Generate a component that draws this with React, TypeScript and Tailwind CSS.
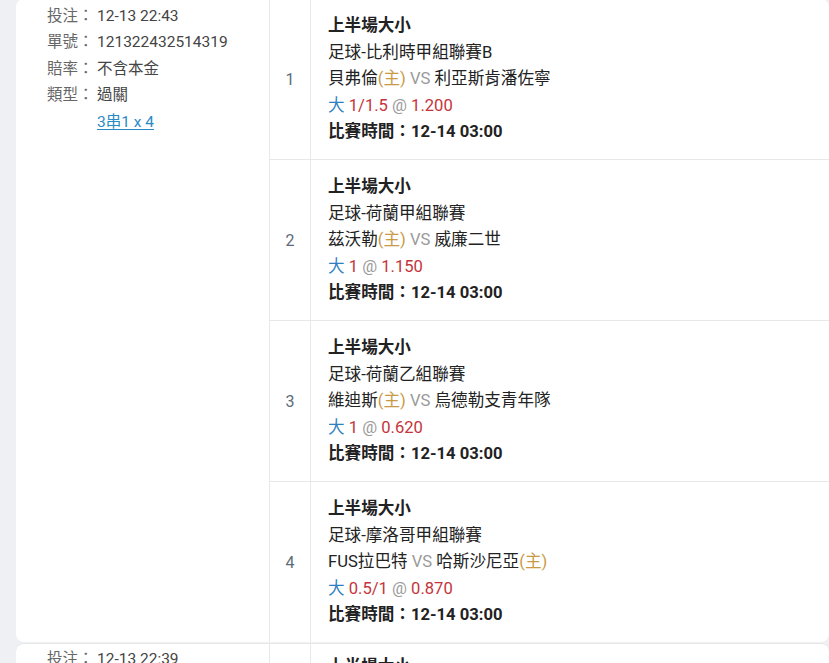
import React from 'react';

type Leg = {
  no: number;
  league: string;
  home: string;
  away: string;
  homeFirst: boolean;
  line: string;
  odds: string;
};

const legs: Leg[] = [
  { no: 1, league: '足球-比利時甲組聯賽B', home: '貝弗倫', away: '利亞斯肯潘佐寧', homeFirst: true, line: '1/1.5', odds: '1.200' },
  { no: 2, league: '足球-荷蘭甲組聯賽', home: '茲沃勒', away: '威廉二世', homeFirst: true, line: '1', odds: '1.150' },
  { no: 3, league: '足球-荷蘭乙組聯賽', home: '維迪斯', away: '烏德勒支青年隊', homeFirst: true, line: '1', odds: '0.620' },
  { no: 4, league: '足球-摩洛哥甲組聯賽', home: '哈斯沙尼亞', away: 'FUS拉巴特', homeFirst: false, line: '0.5/1', odds: '0.870' },
];

const font = { fontFamily: 'Roboto, "Noto Sans CJK TC", sans-serif' };

const Info: React.FC<{ label: string; children: React.ReactNode }> = ({ label, children }) => (
  <div className="flex h-[26.5px] items-center">
    <span className="w-[50px] text-[#666]">{label}</span>
    <span className="text-[#444]">{children}</span>
  </div>
);

const LegRow: React.FC<{ leg: Leg; last: boolean }> = ({ leg, last }) => (
  <div className={`flex ${last ? 'h-[160px]' : 'h-[161px] border-b border-[#e8e8e8]'}`}>
    <div className="flex w-[41px] shrink-0 items-center justify-center border-r border-[#e8e8e8] pt-[2px] text-[16px] text-[#5d6b78]">
      {leg.no}
    </div>
    <div className="flex flex-col pl-[17px] pt-[14px] text-[16.6px] leading-[26.5px] text-[#222]">
      <div className="font-bold">上半場大小</div>
      <div>{leg.league}</div>
      <div>
        {leg.homeFirst ? (
          <>
            {leg.home}
            <span className="text-[#c99a45]">(主)</span>
            <span className="text-[#9a9a9a]"> VS </span>
            {leg.away}
          </>
        ) : (
          <>
            {leg.away}
            <span className="text-[#9a9a9a]"> VS </span>
            {leg.home}
            <span className="text-[#c99a45]">(主)</span>
          </>
        )}
      </div>
      <div>
        <span className="text-[#2f7fc0]">大</span>{' '}
        <span className="text-[#c4343a]">{leg.line}</span>{' '}
        <span className="text-[#9a9a9a]">@</span>{' '}
        <span className="text-[#c4343a]">{leg.odds}</span>
      </div>
      <div className="font-bold">比賽時間：12-14 03:00</div>
    </div>
  </div>
);

export default function App() {
  return (
    <div className="h-[663px] overflow-hidden bg-[#eef0f3] pl-4 text-[15.5px]" style={font}>
      <div className="-mt-px flex rounded-lg bg-white">
        <div className="w-[254px] shrink-0 border-r border-[#e8e8e8] pl-[31px] pt-[4px]">
          <Info label="投注：">12-13 22:43</Info>
          <Info label="單號：">121322432514319</Info>
          <Info label="賠率：">不含本金</Info>
          <Info label="類型：">過關</Info>
          <div className="flex h-[26.5px] items-center pl-[50px]">
            <a className="text-[#2a8bc4] underline underline-offset-2">3串1 x 4</a>
          </div>
        </div>
        <div className="flex-1">
          {legs.map((l, i) => (
            <LegRow key={l.no} leg={l} last={i === legs.length - 1} />
          ))}
        </div>
      </div>
      <div className="mt-px flex rounded-lg border-t border-[#e8e8e8] bg-white">
        <div className="w-[254px] shrink-0 border-r border-[#e8e8e8] pl-[31px] pt-[2px]">
          <Info label="投注：">12-13 22:39</Info>
        </div>
        <div className="flex-1">
          <div className="flex h-[160px]">
            <div className="w-[41px] shrink-0 border-r border-[#e8e8e8]" />
            <div className="pl-[17px] pt-[10px] text-[16.6px] font-bold leading-[26.5px] text-[#222]">上半場大小</div>
          </div>
        </div>
      </div>
    </div>
  );
}
